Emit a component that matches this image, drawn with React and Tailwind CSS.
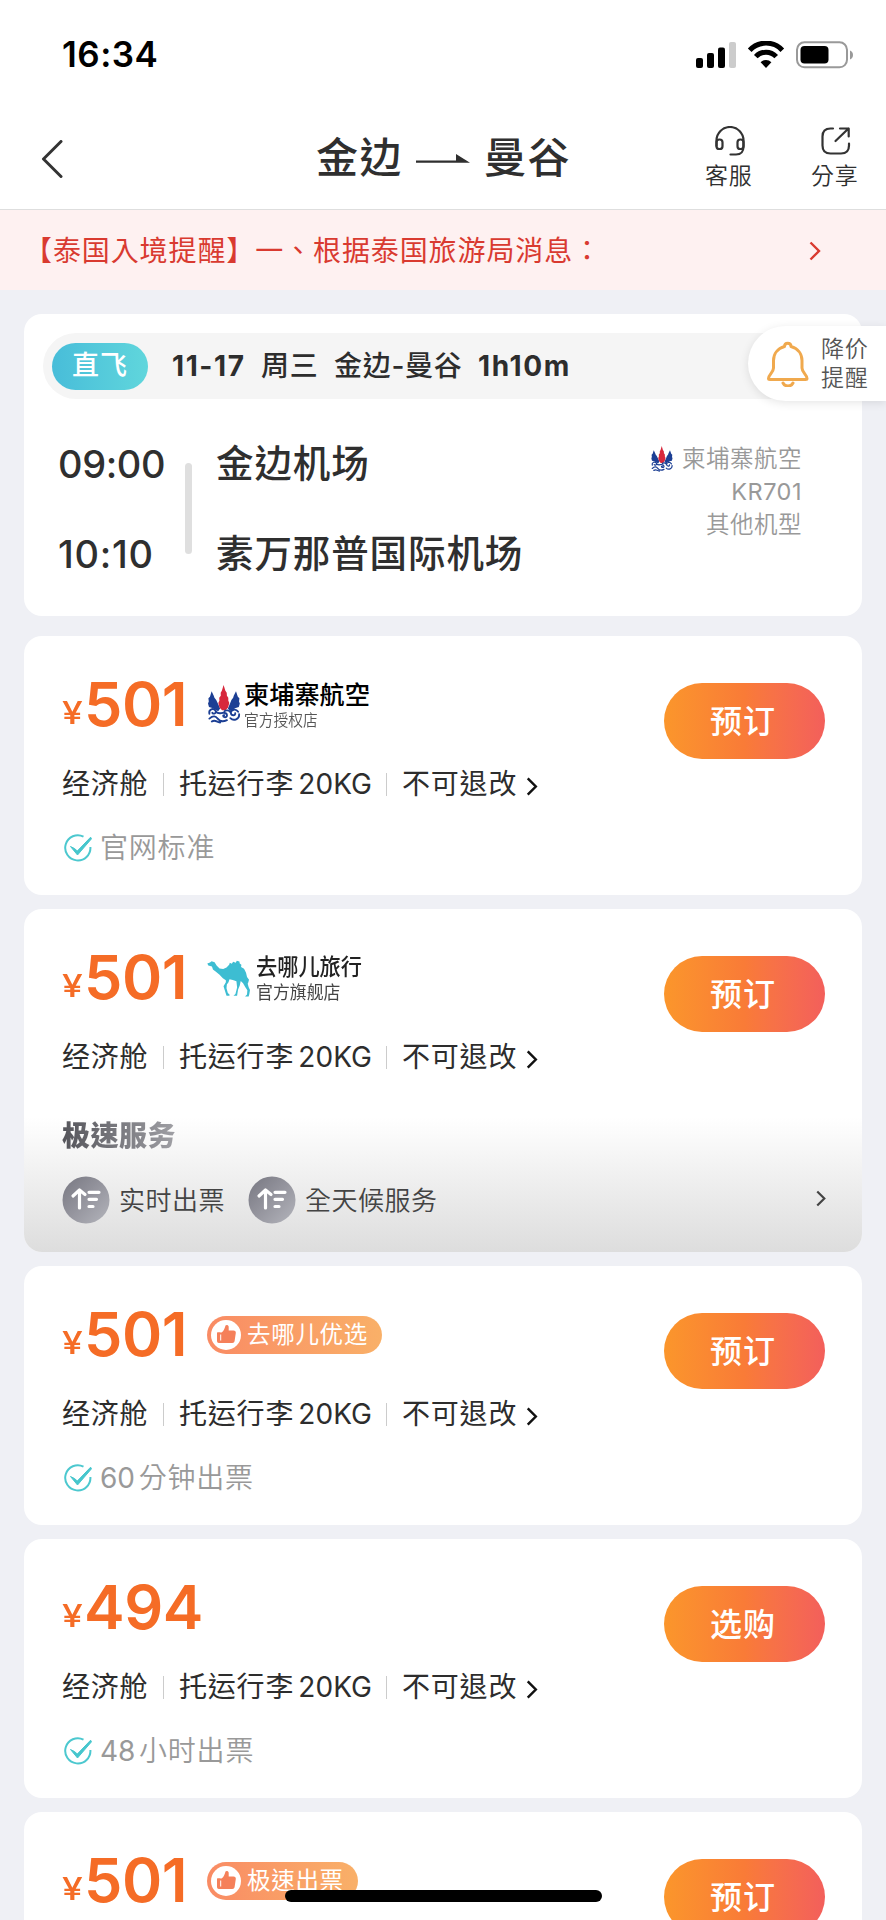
import React from "react";

const Chevron = ({ className, stroke = 2.6 }) => (
  <svg viewBox="0 0 12 20" fill="none" stroke="currentColor" strokeWidth={stroke} className={className}>
    <path d="M1.5 1.5 10 10 1.5 18.5" />
  </svg>
);

const Curl = ({ d, w = 1.9 }) => <path d={d} fill="none" stroke="#1c3f94" strokeWidth={w} strokeLinecap="round" />;

const LotusLogo = ({ className }) => (
  <svg viewBox="0 0 34 40" className={className}>
    <path d="M4.300 6.500 2.600 12 1 13.500 1.400 17 .600 19 1.600 22.500 5 23.500 11 27 13 24 10.500 18.500 9 15.500 7.200 13 6.500 11z" fill="#1c3f94" />
    <path d="M29.300 6.500 31.200 12 32.800 13.500 32.400 17 33.200 19 32.200 22.500 29 23.500 23 27 21 24 23.400 18.500 24.600 15.500 26.400 13 27 11z" fill="#1c3f94" />
    <path d="M16.600 0 14.800 6 13.600 8 13.700 11 12.100 13 12.300 16 11.200 18.500 12.400 23 15 26H18.600L21.200 23 22.400 18.500 21.400 16 21.400 13 20 11 19.800 8 18.400 6z" fill="#d7283c" />
    <Curl d="M2 29.5C1 25 6 23 8.500 26.500 9.500 29 6 30.500 5 28.500M8.500 27C12 31 14 28 17 28.500 21 29 21 33.500 17.500 33 15.500 32.500 16 30.800 17.300 31" />
    <Curl d="M31.500 27.500C29 23.500 24 25.500 24 28.500 24.500 32 29 31.500 28.500 29M24 28.500C22.500 25.500 18.500 25.500 17.500 27" />
    <Curl d="M2 34.500C6 31 8.500 32 10.500 34.500 13 37.800 17 37.500 20 36M32.500 30C33 35 27 37.500 23.500 34M4.500 37.500C8 35 9 38 13 38.500" />
  </svg>
);

const CamelLogo = ({ className }) => (
  <svg viewBox="619 181 130 111" className={className}>
    <path
      fill="#3dbdd2"
      d="M620 191 628 188 633 184 642 187 648 197 657 206 668 208 678 203 686 195 688 189 694 192 698 186 706 189 709 183 717 185 718 191 723 195 722 202 731 207 737 219 740 232 746 240 744 248 742 252 745 263 749 271 747 283 745 291H734L740 285 741 272 735 263 728 251 721 244 718 258 713 270 711 282 710 289H699L705 283 710 264 708 245 697 241 687 239 684 248 679 255 678 266 682 280 687 285V289H678L672 270 669 260 676 248 676 242 667 236 657 225 645 215 637 209 634 200 623 197Z"
    />
  </svg>
);

const CheckIcon = () => (
  <svg viewBox="0 0 28 28" className="h-[28px] w-[28px]" fill="none">
    <path d="M19.500 2.600A12.600 12.600 0 1 0 26.400 13" stroke="#4cc8cf" strokeWidth="2" />
    <path d="M6.500 12.500 10.500 14.500 13.300 17 26.600 3.200 27.500 4.800 13.500 21Z" fill="#46c6cd" stroke="#46c6cd" strokeWidth="1" />
  </svg>
);

const FastIcon = ({ id }) => (
  <svg viewBox="0 0 48 48" className="h-[48px] w-[48px]" fill="none">
    <defs>
      <linearGradient id={id} x1="0" y1="0" x2="1" y2="1">
        <stop offset="0" stopColor="#777781" />
        <stop offset=".5" stopColor="#95959e" />
        <stop offset="1" stopColor="#b4b5bc" />
      </linearGradient>
    </defs>
    <circle cx="24" cy="24" r="23.500" fill={`url(#${id})`} />
    <g stroke="#fff" strokeWidth="3.200" strokeLinecap="round" strokeLinejoin="round">
      <path d="M17.500 32V14.500M11 20 17.500 14 23 18.500" />
      <path d="M27 16.300H37M27 23.300H34.500M27 30.500H31" />
    </g>
  </svg>
);

const PickBadge = ({ text, className }) => (
  <div className={`flex h-[38px] items-center rounded-full bg-linear-to-r from-[#f98b64] to-[#f9b068] pl-[4px] ${className}`}>
    <svg viewBox="0 0 30 30" className="h-[30px] w-[30px]">
      <circle cx="15" cy="15" r="15" fill="#fff" />
      <path d="M6.500 12.200H9.200V23H7.800A1.800 1.800 0 0 1 6 21.300V12.700Z" fill="#f5805a" />
      <path d="M10.500 12.500C13 11 13.500 8.500 14.500 5.500 15.200 4.400 17.500 4.800 17.700 6.800V10.500H22.500C24.200 10.500 25 11.600 24.800 13L23.600 21C23.400 22.300 22.600 23 21.300 23H9V12.500Z" fill="#f5805a" />
      <path d="M9.700 14.500V20.500" stroke="#fff" strokeWidth="1" />
    </svg>
    <span className="ml-[6px] text-[23.5px] tracking-[0.7px] text-white">{text}</span>
  </div>
);

function Offer({ price, action = "预订", brand, note, className = "", children }) {
  return (
    <section className={`relative w-[838px] shrink-0 rounded-[18px] bg-white ${className}`}>
      <div className="flex h-[122px] justify-between pl-[38px] pr-[37px]">
        <div className="flex">
          <div className="flex h-[112px] w-[145px] shrink-0 items-baseline pt-[32px] font-semibold text-[#f56c26]">
            <span className="w-[22px] origin-left scale-x-[1.2] pb-[2px] text-[31px] font-medium leading-[68px]"><span className="align-[2px]">¥</span></span>
            <span className="text-[61px] leading-[72px] tracking-[-0.4px]">{price}</span>
          </div>
          {brand}
        </div>
        <button className="mt-[47px] flex h-[76px] w-[161px] items-center rounded-full bg-linear-to-r from-[#fb962b] via-[#f97b37] to-[#f35f5b] pl-[46px] pt-px text-[32px] font-medium tracking-[1px] text-white">
          <span>{action}</span>
        </button>
      </div>
      <div className="flex h-[52px] items-center pl-[38px] text-[28px] text-[#2d2d2d]">
        <span className="w-[101px] shrink-0 tracking-[0.8px]">经济舱</span>
        <i className="h-[23px] w-px bg-[#ccc]" />
        <span className="ml-[15px] flex w-[207px] shrink-0 tracking-[0.8px]">
          托运行李<span className="ml-[4px] tracking-[0.1px]">20KG</span>
        </span>
        <i className="h-[23px] w-px bg-[#ccc]" />
        <span className="ml-[15px] w-[124px] shrink-0 tracking-[0.8px]">不可退改</span>
        <Chevron className="mt-[5px] h-[19px] w-[12px] text-[#111]" />
      </div>
      {note && (
        <div className="mt-[19px] flex h-[38px] items-center pl-[40px] text-[28px] font-[350] text-[#999]">
          <CheckIcon />
          <span className="ml-[8px] flex tracking-[0.8px]">{note}</span>
        </div>
      )}
      {children}
    </section>
  );
}

const IssueTime = ({ amount, unit }) => (
  <>
    <span className="mr-[4px] font-normal tracking-[-0.2px]">{amount}</span>
    {unit}
  </>
);

const StatusBar = () => (
  <div className="flex h-[109px] items-center justify-between pl-[62px] pr-[33px]">
    <span className="text-[35px] font-semibold tracking-[0.5px] text-black">16:34</span>
    <svg viewBox="0 0 158 28" className="h-[28px] w-[158px]">
      <rect x="1" y="17" width="7" height="10" rx="2" />
      <rect x="12" y="12" width="7" height="15" rx="2" />
      <rect x="23" y="6.500" width="7" height="20.500" rx="2" />
      <rect x="34" y="1" width="7" height="26" rx="2" fill="#ccc" />
      <g fill="none" stroke="#000" strokeWidth="5">
        <path d="M54.700 9.200A22.200 22.200 0 0 1 87.300 9.200" />
        <path d="M60.800 15.600A14 14 0 0 1 81.200 15.600" />
      </g>
      <path d="M71 27 65.600 21.200A7.600 7.600 0 0 1 76.400 21.200Z" />
      <rect x="102" y="1.300" width="50" height="25" rx="7.500" fill="none" stroke="#999" strokeWidth="2" />
      <rect x="105.500" y="5" width="28" height="17.500" rx="4" />
      <path d="M155 9.500C159 11 159 17 155 18.500Z" fill="#999" />
    </svg>
  </div>
);

const Header = () => (
  <header className="flex h-[101px] border-b border-[#dedede] pl-[41px] text-[#2f2f2f]">
    <svg viewBox="0 0 22 38" className="mt-[31px] h-[38px] w-[22px]" fill="none" stroke="#333" strokeWidth="3" strokeLinecap="round" strokeLinejoin="round">
      <path d="M20 1.500 2.500 19 20 36.500" />
    </svg>
    <h1 className="ml-[253px] flex h-[96px] items-center text-[42px] font-medium tracking-[1.5px]">
      <span className="w-[100px]">金边</span>
      <svg viewBox="0 0 54 10" className="mt-[3px] h-[10px] w-[54px]">
        <path d="M0 6.500H40V0L54 8.800H0Z" fill="#2f2f2f" />
      </svg>
      <span className="ml-[14px] w-[88px]">曼谷</span>
    </h1>
    <div className="ml-[133px] w-[50px] pt-[17px] text-[23px] font-[350] tracking-[0.7px]">
      <svg viewBox="0 0 30 30" className="ml-[10px] h-[30px] w-[30px]" fill="none" stroke="#333" strokeWidth="2.200" strokeLinecap="round">
        <path d="M1.500 20V14.500A13.500 13.500 0 0 1 28.500 14.500V20C28.500 26.500 26 28.500 21 28.500H15.500" />
        <rect x="1.500" y="13.500" width="6" height="9.500" rx="2.800" />
        <rect x="22.500" y="13.500" width="6" height="9.500" rx="2.800" />
      </svg>
      <div className="mt-[4px] leading-[32px]">客服</div>
    </div>
    <div className="ml-[56px] w-[50px] pt-[17px] text-[23px] font-[350] tracking-[0.7px]">
      <svg viewBox="0 0 30 30" className="ml-[10px] h-[30px] w-[30px]" fill="none" stroke="#333" strokeWidth="2.200" strokeLinecap="round" strokeLinejoin="round">
        <path d="M12 2.500H9.500Q1.500 2.500 1.500 10.500V19.500Q1.500 27.500 9.500 27.500H20Q28 27.500 28 19.500V17.500" />
        <path d="M14.500 15 27.500 2.500M19 2.500H27.700V10.500" />
      </svg>
      <div className="mt-[4px] leading-[32px]">分享</div>
    </div>
  </header>
);

const FlightCard = () => (
  <section className="relative mt-[24px] h-[302px] w-[838px] shrink-0 rounded-[18px] bg-white pt-[19px]">
    <div className="ml-[19px] mr-[19px] flex h-[66px] items-center rounded-full bg-[#f5f5f5] pl-[9px] text-[28px] text-[#2d2d2d]">
      <span className="flex h-[47px] w-[96px] shrink-0 items-center rounded-full bg-linear-to-r from-[#48bdd9] to-[#60d6dc] pl-[20px] pt-px text-[27px] font-medium tracking-[1px] text-white">直飞</span>
      <span className="ml-[24px] w-[89px] shrink-0 font-bold tracking-[1.6px]">11-17</span>
      <span className="w-[73px] shrink-0 font-medium tracking-[0.8px]">周三</span>
      <span className="w-[143px] shrink-0 font-medium tracking-[0.7px]">金边-曼谷</span>
      <span className="ml-px font-bold tracking-[1.6px]">1h10m</span>
    </div>
    <div className="flex pl-[34px] pt-[20px] font-medium text-[#2f2f2f]">
      <div className="w-[127px] shrink-0 text-[38px]">
        <div className="flex h-[90px] items-center tracking-[-0.4px]">09:00</div>
        <div className="flex h-[90px] items-center tracking-[0.7px]">10:10</div>
      </div>
      <i className="mt-[44px] h-[91px] w-[7px] shrink-0 rounded-full bg-[#dfdfdf]" />
      <div className="ml-[24px] w-[401px] shrink-0 text-[37.500px] tracking-[0.9px]">
        <div className="flex h-[90px] items-center">金边机场</div>
        <div className="flex h-[90px] items-center">素万那普国际机场</div>
      </div>
      <div className="flex w-[185px] flex-col items-end pt-[23px] text-[23.500px] font-[350] tracking-[0.5px] text-[#999]">
        <div className="flex h-[33px] items-center">
          <LotusLogo className="mr-[8px] h-[26px] w-[24px]" />柬埔寨航空
        </div>
        <div className="flex h-[33px] items-center font-normal">KR701</div>
        <div className="flex h-[33px] items-center">其他机型</div>
      </div>
    </div>
    <aside className="absolute left-[724px] top-[12px] flex h-[75px] w-[138px] items-center rounded-l-full bg-white pl-[19px] pt-px text-[23px] font-[350] leading-[29px] tracking-[0.7px] text-[#555] shadow-[0_2px_10px_rgba(0,0,0,0.10)]">
      <svg viewBox="0 0 42 46" className="h-[46px] w-[42px]" fill="none" stroke="#f0a94e" strokeWidth="3" strokeLinecap="round" strokeLinejoin="round">
        <path d="M17.500 5.500C17.500 1 24 1 24 5.500 31 7.500 35 13 35 19.500V27C35 31.500 40 33.500 40 37.500Q40 38.500 38.500 38.500H3Q1.500 38.500 1.500 37.500C1.500 33.500 6.500 31.500 6.500 27V19.500C6.500 13 10.500 7.500 17.500 5.500Z" />
        <path d="M16 42C18 46 24 46 26 42" />
      </svg>
      <div className="ml-[12px] w-[51px]">降价<br />提醒</div>
    </aside>
  </section>
);

const AirlineBrand = () => (
  <div className="flex pt-[49px]">
    <LotusLogo className="h-[39px] w-[34px]" />
    <div className="ml-[3px] flex w-[150px] flex-col">
      <span className="-mt-[6px] text-[25.200px] font-medium leading-[32px] text-black">柬埔寨航空</span>
      <span className="origin-left scale-x-[0.92] text-[16px] font-[350] leading-[18px] text-[#555]">官方授权店</span>
    </div>
  </div>
);

const CamelBrand = () => (
  <div className="flex pt-[51px]">
    <CamelLogo className="h-[37px] w-[43px]" />
    <div className="ml-[6px] flex w-[150px] flex-col">
      <span className="-mt-[8px] origin-left scale-x-[0.93] text-[22.800px] font-medium leading-[30px] text-[#222]">去哪儿旅行</span>
      <span className="-mt-px origin-left scale-x-[0.95] text-[17.800px] leading-[24px] text-[#444]">官方旗舰店</span>
    </div>
  </div>
);

export default function App() {
  return (
    <div className="relative h-[1920px] w-[886px] overflow-hidden bg-[#eff0f5] font-['Inter','Noto_Sans_CJK_TC',sans-serif] whitespace-nowrap">
      <div className="bg-white">
        <StatusBar />
        <Header />
      </div>
      <div className="flex h-[80px] items-center justify-between bg-[#fef1f1] pl-[24px] pr-[65px] pt-px text-[28px] tracking-[0.9px] text-[#d93a30]">
        <span>【泰国入境提醒】一、根据泰国旅游局消息：</span>
        <Chevron className="h-[20px] w-[12px]" stroke={2.4} />
      </div>
      <main className="flex flex-col items-center">
        <FlightCard />
        <Offer className="mt-[20px] h-[259px]" price="501" brand={<AirlineBrand />} note="官网标准" />
        <Offer className="mt-[14px] h-[343px]" price="501" brand={<CamelBrand />}>
          <div className="mt-[34px] h-[135px] rounded-b-[18px] bg-linear-to-b from-white to-[#dddddd] pl-[38px] pr-[36px]">
            <div className="flex h-[38px] items-center">
              <span className="bg-linear-to-r from-[#55555b] to-[#a0a0a5] bg-clip-text text-[28px] font-black leading-[38px] tracking-[0.5px] text-transparent">极速服务</span>
            </div>
            <div className="mt-[21px] flex h-[48px] items-center text-[26px] font-[350] tracking-[0.5px] text-[#444]">
              <FastIcon id="fastA" />
              <span className="ml-[9px] w-[129px]">实时出票</span>
              <FastIcon id="fastB" />
              <span className="ml-[9px]">全天候服务</span>
              <Chevron className="ml-auto mb-[4px] h-[17px] w-[10px]" />
            </div>
          </div>
        </Offer>
        <Offer className="mt-[14px] h-[259px]" price="501" brand={<PickBadge text="去哪儿优选" className="mt-[50px] w-[175px]" />} note={<IssueTime amount="60" unit="分钟出票" />} />
        <Offer className="mt-[14px] h-[259px]" price="494" action="选购" note={<IssueTime amount="48" unit="小时出票" />} />
        <Offer className="mt-[14px] h-[259px]" price="501" brand={<PickBadge text="极速出票" className="mt-[50px] w-[151px]" />} />
      </main>
      <div className="absolute left-[285px] top-[1890px] h-[12px] w-[317px] rounded-full bg-black" />
    </div>
  );
}
